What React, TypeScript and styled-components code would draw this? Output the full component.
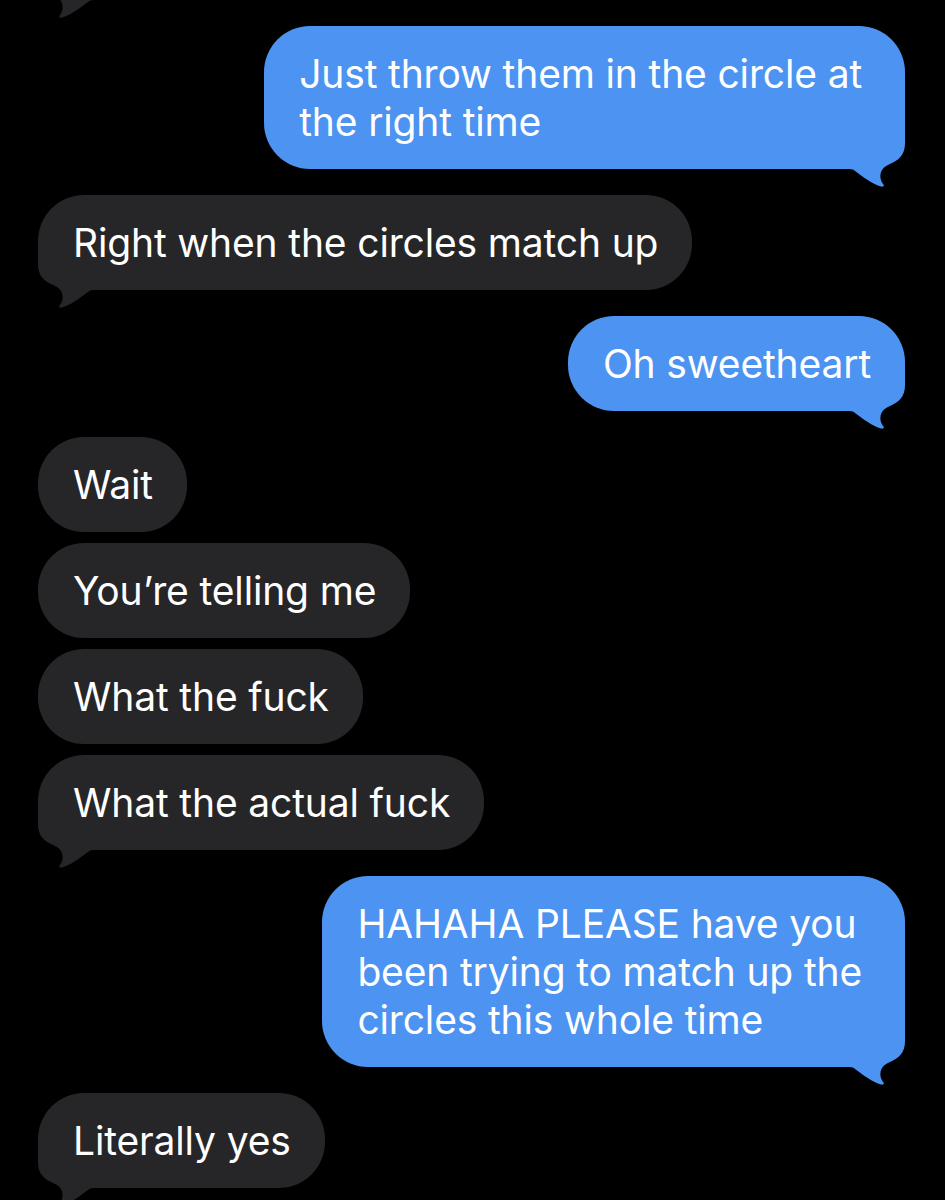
import React from "react";
import styled, { createGlobalStyle } from "styled-components";

type Side = "in" | "out";

interface Message {
  side: Side;
  lines: string[];
  tail?: boolean;
  grouped?: boolean; // follows a message from the same sender
}

const thread: Message[] = [
  { side: "in", lines: [""], tail: true },
  { side: "out", lines: ["Just throw them in the circle at", "the right time"], tail: true },
  { side: "in", lines: ["Right when the circles match up"], tail: true },
  { side: "out", lines: ["Oh sweetheart"], tail: true },
  { side: "in", lines: ["Wait"] },
  { side: "in", lines: ["You’re telling me"], grouped: true },
  { side: "in", lines: ["What the fuck"], grouped: true },
  { side: "in", lines: ["What the actual fuck"], grouped: true, tail: true },
  {
    side: "out",
    lines: ["HAHAHA PLEASE have you", "been trying to match up the", "circles this whole time"],
    tail: true,
  },
  { side: "in", lines: ["Literally yes"], tail: true },
];

const BLUE = "#4c93f2";
const GRAY = "#262629";

const GlobalStyle = createGlobalStyle`
  html, body {
    margin: 0;
    background: #000;
  }
  body {
    font-family: Inter, "Noto Sans", "Liberation Sans", sans-serif;
  }
`;

const Screen = styled.div`
  width: 945px;
  height: 1200px;
  background: #000;
  overflow: hidden;
`;

const Thread = styled.div`
  display: flex;
  flex-direction: column;
  padding: 0 40px 0 38px;
  margin-top: -95px;
`;

const Row = styled.div<{ $side: Side; $grouped: boolean }>`
  display: flex;
  justify-content: ${(p) => (p.$side === "out" ? "flex-end" : "flex-start")};
  margin-top: ${(p) => (p.$grouped ? 11 : 26)}px;

  &:first-child {
    margin-top: 0;
  }
`;

const Bubble = styled.div<{ $side: Side; $wrapped: boolean }>`
  position: relative;
  width: fit-content;
  padding: 23.5px ${(p) => (p.$wrapped ? 43 : 34)}px 23.5px 35px;
  border-radius: 46px;
  background: ${(p) => (p.$side === "out" ? BLUE : GRAY)};
  color: #fff;
  font-size: 39px;
  letter-spacing: -0.15px;
  line-height: 48px;
  white-space: nowrap;
`;

const Line = styled.span`
  position: relative;
  z-index: 1;
  display: block;
  height: 48px;
`;

const TailMark = styled.svg<{ $side: Side }>`
  position: absolute;
  z-index: 0;
  bottom: -18px;
  width: 56px;
  height: 64px;
  ${(p) => (p.$side === "out" ? "right: 0;" : "left: 0; transform: scaleX(-1);")}
`;

// squared-off corner with the little curl under the last bubble of a run
const Tail = ({ side }: { side: Side }) => (
  <TailMark $side={side} viewBox="0 0 56 64" aria-hidden>
    <path
      fill={side === "out" ? BLUE : GRAY}
      d="M0,0 H56 V20 C56,32 50,37 40,41.5 C33,44.5 31,49 31.5,55 C32,58 33.5,60.5 34.5,61.5 C35.5,63 34,64 32,63.5 C24,61.5 14,54 4,46.5 L0,46 Z"
    />
  </TailMark>
);

const App = () => {
  return (
    <Screen>
      <GlobalStyle />
      <Thread>
        {thread.map((m, i) => (
          <Row key={i} $side={m.side} $grouped={!!m.grouped}>
            <Bubble $side={m.side} $wrapped={m.lines.length > 1}>
              {m.tail && <Tail side={m.side} />}
              {m.lines.map((l, j) => (
                <Line key={j}>{l}</Line>
              ))}
            </Bubble>
          </Row>
        ))}
      </Thread>
    </Screen>
  );
};

export default App;
